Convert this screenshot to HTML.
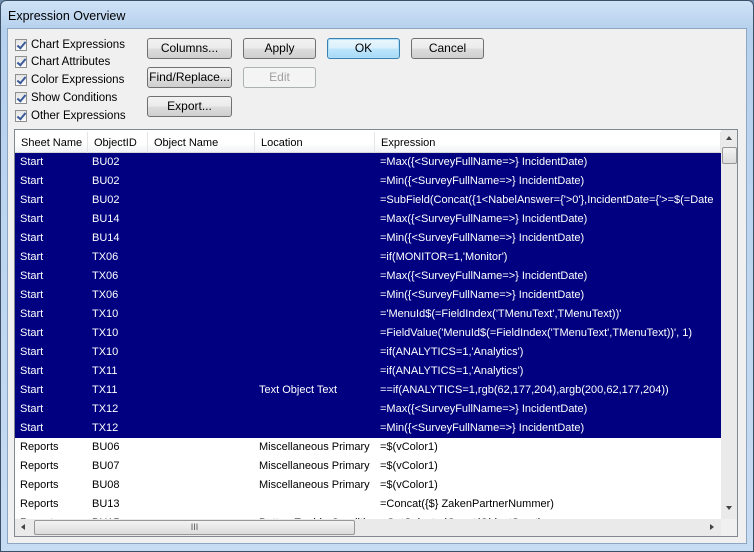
<!DOCTYPE html>
<html><head><style>
*{margin:0;padding:0;box-sizing:border-box}
body{width:754px;height:552px;overflow:hidden;background:#6f8fb0;font-family:"Liberation Sans",sans-serif;font-size:11.5px;color:#000;position:relative}
.frame{position:absolute;left:0;top:0;width:754px;height:552px;border-radius:6px 6px 0 0;background:linear-gradient(to bottom,#cfe2f6 0,#b6d1ee 28px,#c6dcf2 100%);border:1px solid #3d4f66}
.title{position:absolute;left:8px;top:9px;font-size:12.5px;color:#000}
.client{position:absolute;left:7px;top:28px;width:740px;height:516px;background:#f0f0f0;border:1px solid #8ea6c2}
.cb{position:absolute;left:15px;height:13px;display:flex;align-items:center}
.cb i{display:inline-block;width:12px;height:12px;border:1px solid #8f8f8f;background:linear-gradient(#e4e4e4,#fbfbfb);margin-right:4px;position:relative}
.cb i:after{content:"";position:absolute;left:3px;top:0px;width:3px;height:7px;border:solid #3a5a9a;border-width:0 2px 2px 0;transform:rotate(40deg)}
.btn{position:absolute;height:21px;border:1px solid #707070;border-radius:3px;background:linear-gradient(#f2f2f2 0,#ebebeb 50%,#dddddd 51%,#cfcfcf 100%);text-align:center;line-height:19px;font-size:12px}
.btn.dis{border-color:#adb2b5;background:#f4f4f4;color:#a0a0a0}
.btn.def{border-color:#3c7fb1;box-shadow:inset 0 0 0 1px #aee0f8;background:linear-gradient(#eaf6fd,#d9f0fc 50%,#bee6fd 51%,#a7d9f5)}
.list{position:absolute;left:14px;top:129px;width:724px;height:408px;border:1px solid #828790;background:#fff;overflow:hidden;font-size:11px}
.hdr{position:absolute;left:0;top:0;height:23px;width:706px;background:linear-gradient(#fff 0,#fff 60%,#f1f2f4 100%);border-bottom:1px solid #d5d5d5}
.hdr span{position:absolute;top:2px;height:22px;line-height:22px;padding-left:6px;border-right:1px solid #e3e5e8}
.row{position:absolute;left:0;width:706px;height:19px;line-height:19px}
.row.s{background:#000080;color:#fff}
.row span{position:absolute;top:0;white-space:nowrap;overflow:hidden}
.vs{position:absolute;left:706px;top:0;width:17px;height:389px;background:#eaeaea}
.hs{position:absolute;left:0;top:389px;width:706px;height:17px;background:#eaeaea}
.thumb{position:absolute;border:1px solid #979797;border-radius:2px;background:linear-gradient(#f3f3f3,#dcdcdc)}
.corner{position:absolute;left:706px;top:389px;width:17px;height:17px;background:#f0f0f0}
</style></head><body>
<div class="frame"></div>
<div class="title">Expression Overview</div>
<div class="client"></div>
<div class="cb" style="top:38px"><i></i>Chart Expressions</div>
<div class="cb" style="top:55px"><i></i>Chart Attributes</div>
<div class="cb" style="top:73px"><i></i>Color Expressions</div>
<div class="cb" style="top:91px"><i></i>Show Conditions</div>
<div class="cb" style="top:109px"><i></i>Other Expressions</div>
<div class="btn" style="left:147px;top:38px;width:85px">Columns...</div>
<div class="btn" style="left:243px;top:38px;width:73px">Apply</div>
<div class="btn def" style="left:327px;top:38px;width:73px">OK</div>
<div class="btn" style="left:411px;top:38px;width:73px">Cancel</div>
<div class="btn" style="left:147px;top:67px;width:85px">Find/Replace...</div>
<div class="btn dis" style="left:243px;top:67px;width:73px">Edit</div>
<div class="btn" style="left:147px;top:96px;width:85px">Export...</div>
<div class="list">
<div class="hdr"><span style="left:0;width:73px">Sheet Name</span><span style="left:73px;width:60px">ObjectID</span><span style="left:133px;width:107px">Object Name</span><span style="left:240px;width:120px">Location</span><span style="left:360px;width:346px">Expression</span></div>
<div id="rows"></div>
<div class="vs"><div style="position:absolute;left:5px;top:6px;border:3px solid transparent;border-bottom:4px solid #444;border-top:0;width:0"></div><div class="thumb" style="left:1px;top:17px;width:15px;height:17px"></div><div style="position:absolute;left:5px;top:376px;border:3px solid transparent;border-top:4px solid #444;border-bottom:0;width:0"></div></div>
<div class="hs"><div style="position:absolute;left:6px;top:5px;border:3px solid transparent;border-right:4px solid #444;border-left:0;height:0"></div><div class="thumb" style="left:19px;top:1px;width:321px;height:15px;text-align:center;line-height:12px;font-size:9px;color:#555">III</div><div style="position:absolute;left:695px;top:5px;border:3px solid transparent;border-left:4px solid #444;border-right:0;height:0"></div></div>
<div class="corner"></div>
</div>
<script>
var d=[["Start","BU02","","","=Max({<SurveyFullName=>} IncidentDate)"],["Start","BU02","","","=Min({<SurveyFullName=>} IncidentDate)"],["Start","BU02","","","=SubField(Concat({1<NabelAnswer={'>0'},IncidentDate={'>=$(=Date"],["Start","BU14","","","=Max({<SurveyFullName=>} IncidentDate)"],["Start","BU14","","","=Min({<SurveyFullName=>} IncidentDate)"],["Start","TX06","","","=if(MONITOR=1,'Monitor')"],["Start","TX06","","","=Max({<SurveyFullName=>} IncidentDate)"],["Start","TX06","","","=Min({<SurveyFullName=>} IncidentDate)"],["Start","TX10","","","='MenuId$(=FieldIndex('TMenuText',TMenuText))'"],["Start","TX10","","","=FieldValue('MenuId$(=FieldIndex('TMenuText',TMenuText))', 1)"],["Start","TX10","","","=if(ANALYTICS=1,'Analytics')"],["Start","TX11","","","=if(ANALYTICS=1,'Analytics')"],["Start","TX11","","Text Object Text","==if(ANALYTICS=1,rgb(62,177,204),argb(200,62,177,204))"],["Start","TX12","","","=Max({<SurveyFullName=>} IncidentDate)"],["Start","TX12","","","=Min({<SurveyFullName=>} IncidentDate)"],["Reports","BU06","","Miscellaneous Primary Color","=$(vColor1)"],["Reports","BU07","","Miscellaneous Primary Color","=$(vColor1)"],["Reports","BU08","","Miscellaneous Primary Color","=$(vColor1)"],["Reports","BU13","","","=Concat({$} ZakenPartnerNummer)"],["Reports","BU15","","Button Enable Condition","=GetSelectedCount(ObjectSoort)"]];
var L=[[5,65],[77,55],[137,100],[244,113],[365,340]],h="";
d.forEach(function(r,i){h+='<div class="row'+(i<15?' s':'')+'" style="top:'+(23+i*19)+'px">';r.forEach(function(c,j){h+='<span style="left:'+L[j][0]+'px;width:'+L[j][1]+'px">'+c.replace(/</g,'&lt;')+'</span>'});h+='</div>'});
document.getElementById('rows').innerHTML=h;
</script>
</body></html>
